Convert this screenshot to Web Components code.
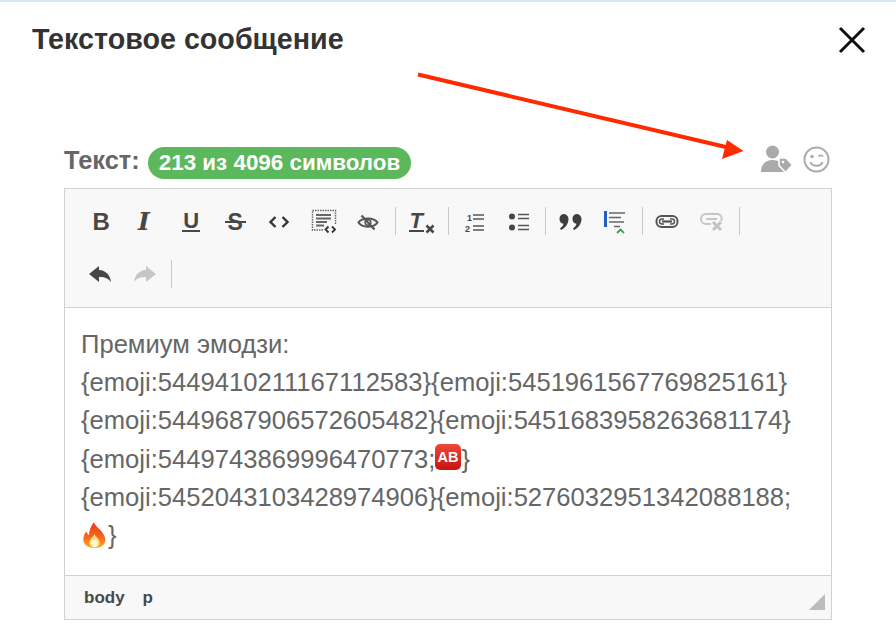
<!DOCTYPE html>
<html lang="ru"><head><meta charset="utf-8"><title>Текстовое сообщение</title>
<style>
html,body{margin:0;padding:0;background:#fff;overflow:hidden;font-family:"Liberation Sans",Arial,sans-serif}
svg{display:block}
</style></head><body>
<modal-dialog>
  <span slot="title">Текстовое сообщение</span>
  <field-label slot="label" count="213 из 4096 символов">Текст:</field-label>
  <rich-editor>
    <tool-row slot="toolbar">
      <tool-btn><span style="font:bold 24px 'Liberation Sans';color:#474747">B</span></tool-btn>
      <tool-btn><span style="font:italic bold 25px 'DejaVu Serif';color:#474747;margin-left:-4px">I</span></tool-btn>
      <tool-btn><span style="font:bold 22px 'Liberation Sans';color:#474747;border-bottom:2px solid #474747;line-height:19px;display:block;padding:0 1px;margin-left:2px">U</span></tool-btn>
      <tool-btn><span style="font:bold 23px 'Liberation Sans';color:#474747;line-height:20px;display:block;position:relative;margin-left:1px">S<i style="position:absolute;left:-3px;right:-3px;top:9px;height:2px;background:#474747"></i></span></tool-btn>
      <tool-btn><svg width="24" height="24" viewBox="0 0 24 24" fill="none" stroke="#333" stroke-width="2.4"><path d="M8.5 7 3.5 12l5 5M15.5 7l5 5-5 5"/></svg></tool-btn>
      <tool-btn><svg width="26" height="26" viewBox="0 0 26 26" fill="none" stroke="#666"><rect x="1.500" y="1.500" width="23" height="19.500" stroke-dasharray="1.500 1" stroke-width="1.500"/><path d="M5 6h15M5 9.500h15M5 13h11M5 16.500h8" stroke-width="1.800"/><rect x="13" y="15" width="13" height="11" fill="#f8f8f8" stroke="none"/><path d="M17.500 17.500 14.500 20.500l3 3M21 17.500l3 3-3 3" stroke="#333" stroke-width="1.800"/></svg></tool-btn>
      <tool-btn><svg width="24" height="24" viewBox="0 0 24 24" fill="none" stroke="#555" stroke-width="2"><path d="M2.500 12.500C6 7 18 7 21.500 12.500 18 18 6 18 2.500 12.500Z"/><circle cx="12" cy="12.500" r="2.800" stroke-width="1.600"/><path d="M5.500 5.500 18.500 19.500" stroke-width="2.200"/></svg></tool-btn>
      <tool-sep></tool-sep>
      <tool-btn><span style="display:flex;align-items:flex-end;margin-left:2px"><span style="font:italic bold 22px/19px 'Liberation Sans';color:#474747;border-bottom:2px solid #474747;display:block;padding:0 1px">T</span><svg width="10" height="10" viewBox="0 0 10 10" style="margin:0 0 -2px 1px"><path d="m1.500 1.500 7 7m0-7-7 7" stroke="#474747" stroke-width="2.600" fill="none"/></svg></span></tool-btn>
      <tool-sep></tool-sep>
      <tool-btn><svg width="24" height="24" viewBox="0 0 24 24" fill="none" stroke="#555" stroke-width="1.600" style="margin-left:3px"><text x="4" y="11" font-family="Liberation Sans" font-weight="bold" font-size="9" fill="#474747" stroke="none">1</text><text x="2" y="22" font-family="Liberation Sans" font-weight="bold" font-size="9" fill="#474747" stroke="none">2</text><path d="M10 5h11M10 9h11M10 16h11M10 20h11"/></svg></tool-btn>
      <tool-btn><svg width="24" height="24" viewBox="0 0 24 24" fill="none" stroke="#555" stroke-width="1.600" style="margin-left:3px"><circle cx="5" cy="6.500" r="3" fill="#474747" stroke="none"/><circle cx="5" cy="17.500" r="3" fill="#474747" stroke="none"/><path d="M11 4.500h11M11 8.500h11M11 15.500h11M11 19.500h11"/></svg></tool-btn>
      <tool-sep></tool-sep>
      <tool-btn><svg width="26" height="24" viewBox="0 0 26 24" fill="#3e3e3e"><path d="M6.500 4a5 5 0 0 1 5 5c0 5-3.500 9-7.500 11l-1-1.500c2-1.500 3.200-3 3.500-4.700A5 5 0 0 1 6.500 4ZM19.500 4a5 5 0 0 1 5 5c0 5-3.500 9-7.500 11l-1-1.500c2-1.500 3.200-3 3.500-4.700A5 5 0 0 1 19.500 4Z"/></svg></tool-btn>
      <tool-btn><svg width="26" height="26" viewBox="0 0 26 26" fill="none" style="margin-left:3px"><rect x="1" y="2" width="3" height="16" fill="#1f62c4"/><path d="M6 4h16M6 8.500h12M6 13h15M11 17.500h6" stroke="#666" stroke-width="1.700"/><path d="m14 24 3.500-3.500L21 24" stroke="#3ca34a" stroke-width="1.800"/></svg></tool-btn>
      <tool-sep></tool-sep>
      <tool-btn><svg width="24" height="24" viewBox="0 0 24 24" fill="none" stroke="#555" stroke-width="2"><rect x="1.500" y="6" width="21" height="11" rx="5"/><path d="M7 11.500h10" stroke-width="2.200"/><path d="M9 9H7a2.500 2.500 0 0 0 0 5h2M15 9h2a2.500 2.500 0 0 1 0 5h-2" stroke-width="1.400"/></svg></tool-btn>
      <tool-btn disabled><svg width="26" height="26" viewBox="0 0 26 26" fill="none" stroke="#c6c6c6" stroke-width="2"><path d="M12 15H7a4.500 4.500 0 0 1 0-10h11a4.500 4.500 0 0 1 4 7"/><path d="M7 10h11" stroke-width="2"/><path d="m14 13 8 8m0-8-8 8" stroke-width="3" stroke="#c2c2c2"/></svg></tool-btn>
      <tool-sep></tool-sep>
      <tool-btn><svg width="26" height="20" viewBox="0 0 26 20" fill="#474747" style="margin-left:-1px"><path d="M11 1 1 9l10 8v-5c5-.5 9 1 12 5 -1-7-5-11.500-12-12Z"/></svg></tool-btn>
      <tool-btn disabled><svg width="26" height="20" viewBox="0 0 26 20" fill="#c6c6c6" style="margin-left:-3px"><path d="m15 1 10 8-10 8v-5c-5-.5-9 1-12 5 1-7 5-11.500 12-12Z"/></svg></tool-btn>
      <tool-sep style="margin-left:3px"></tool-sep>
    </tool-row>
    <div>Премиум эмодзи:</div>
    <div>{emoji:5449410211167112583}{emoji:5451961567769825161}</div>
    <div>{emoji:5449687906572605482}{emoji:5451683958263681174}</div>
    <div>{emoji:5449743869996470773;<emoji-ab></emoji-ab>}</div>
    <div>{emoji:5452043103428974906}{emoji:5276032951342088188;</div>
    <div><emoji-fire></emoji-fire>}</div>
    <span slot="path">body</span><span slot="path">p</span>
  </rich-editor>
</modal-dialog>
<script>
function def(name, css, html, extra){
  class C extends HTMLElement{
    constructor(){super();this.attachShadow({mode:'open'}).innerHTML='<style>'+css+'</style>'+html;}
    connectedCallback(){ if(extra) extra(this); }
  }
  customElements.define(name,C);
}
def('modal-dialog',`
:host{display:block;position:relative;width:896px;height:640px;box-sizing:border-box;border-top:2px solid #d8e7f0;font-family:"Liberation Sans",Arial,sans-serif}
header{display:flex;justify-content:space-between;align-items:center;padding:19px 30px 0 32px;height:37px}
h1{margin:0;font-size:28.700px;font-weight:bold;color:#333;line-height:37px;letter-spacing:0}
.close{display:block}
main{padding:87px 64px 0}
.arrow{position:absolute;left:0;top:0;pointer-events:none}
`,`
<header><h1><slot name="title"></slot></h1>
<svg class="close" width="28" height="28" viewBox="0 0 28 28" fill="none" stroke="#111" stroke-width="3"><path d="M2 2 26 26M26 2 2 26"/></svg></header>
<main><slot name="label"></slot><slot></slot></main>
<svg class="arrow" width="896" height="200" viewBox="0 0 896 200"><path d="M418 72.500 728 145.500" stroke="#ff2a00" stroke-width="4" fill="none"/><path d="M743.500 149 727 138 722 157Z" fill="#ff2a00"/></svg>
`);
def('field-label',`
:host{display:flex;align-items:center;height:34px;margin-bottom:9px;font-weight:bold;font-size:25.400px;color:#666}
.t{margin-top:-3px}
.badge{margin-left:8px;margin-top:1px;background:#5cb85c;color:#fff;font-size:22.400px;line-height:32px;height:32px;padding:0 11px;border-radius:16px;white-space:nowrap}
.icons{margin-left:auto;display:flex;align-items:center;gap:10px;padding-right:2px;margin-top:-6px}
`,`
<span class="t"><slot></slot></span><span class="badge" id="b"></span>
<span class="icons">
<svg width="32" height="28" viewBox="0 0 32 28" fill="#aaa"><circle cx="11.500" cy="7" r="6.500"/><path d="M0 27c0-8 5-12 11.500-12 3 0 5.500 .8 7.500 2.300l-2 2L24 27Z"/><path d="M18 13h7l6.500 7-7 7.500-6.500-7Z" stroke="#fff" stroke-width="1.500"/><circle cx="22" cy="17" r="1.300" fill="#fff"/></svg>
<svg width="27" height="27" viewBox="0 0 27 27" fill="none" stroke="#aaa" stroke-width="2"><circle cx="13.500" cy="13.500" r="12"/><circle cx="9" cy="10.500" r="1.700" fill="#aaa" stroke="none"/><path d="M15.500 10.500c1-1.500 3.500-1.500 4.500 0" stroke-width="1.800"/><path d="M7.500 16c1.500 5 10.500 5 12 0" stroke-width="2"/></svg>
</span>`,el=>{el.shadowRoot.getElementById('b').textContent=el.getAttribute('count');});
def('rich-editor',`
:host{display:block;box-sizing:border-box;width:768px;height:432px;border:1px solid #d1d1d1;background:#fff;position:relative}
.tb{height:119px;box-sizing:border-box;background:#f8f8f8;border-bottom:1px solid #d1d1d1;padding:6px 14px 0}
.body{height:267px;box-sizing:border-box;padding:17px 16px 0;font-size:25.600px;line-height:38.200px;color:#666;white-space:nowrap}
.ft{height:44px;box-sizing:border-box;background:#f8f8f8;border-top:1px solid #d1d1d1;padding:0 19px;display:flex;align-items:center;gap:18px;font-size:17px;font-weight:bold;color:#484848;position:relative}
.grip{position:absolute;right:6px;bottom:9px;width:0;height:0;border-style:solid;border-width:0 0 16px 16px;border-color:transparent transparent #bcbcbc transparent}
`,`
<div class="tb"><slot name="toolbar"></slot></div>
<div class="body"><slot></slot></div>
<div class="ft"><slot name="path"></slot><i class="grip"></i></div>`);
def('tool-row',`:host{display:flex;flex-wrap:wrap;align-items:center;width:680px}`,`<slot></slot>`);
def('tool-btn',`:host{display:flex;align-items:center;justify-content:center;width:44.500px;height:53px}`,`<slot></slot>`);
def('tool-sep',`:host{display:block;width:1px;height:28px;background:#c9c9c9;margin:-1px 2.500px 0 4.500px}`,``);
def('emoji-ab',`:host{display:inline-block;vertical-align:-2px;width:26px;height:26px;margin:0}`,`
<svg width="26" height="26" viewBox="0 0 26 26" style="display:block"><defs><linearGradient id="g" x1="0" y1="0" x2="0" y2="1"><stop offset="0" stop-color="#f0483a"/><stop offset="1" stop-color="#c8120c"/></linearGradient></defs><rect width="26" height="26" rx="5" fill="url(#g)"/><text x="13" y="18" text-anchor="middle" font-family="Liberation Sans" font-weight="bold" font-size="14.500" fill="#fff">AB</text></svg>`);
def('emoji-fire',`:host{display:inline-block;vertical-align:-4px;width:23px;height:26px;margin:0 2px 0 2px}`,`
<svg width="23" height="26" viewBox="0 0 23 26" style="display:block"><defs><linearGradient id="f" x1="0" y1="0" x2="0" y2="1"><stop offset="0" stop-color="#e8391c"/><stop offset=".6" stop-color="#f7691d"/><stop offset="1" stop-color="#fbb02a"/></linearGradient></defs><path d="M11 0c1 4 5 6 8 10 3 4 4 7 3 10-1 4-6 6-10.500 6S2 24 .8 20C-.4 16 1 12 3.500 9.500 4 11.500 5 12.500 6 13 6 8 8 4 11 0Z" fill="url(#f)"/><path d="M11.500 12c1 2.500 5 5 5 8.500 0 3-2.500 5-5 5s-5-2-5-5c0-3.500 3.500-5 5-8.500Z" fill="#fde27a"/><ellipse cx="11.500" cy="21.500" rx="3" ry="3.800" fill="#fff7cf"/></svg>`);
</script>
</body></html>
